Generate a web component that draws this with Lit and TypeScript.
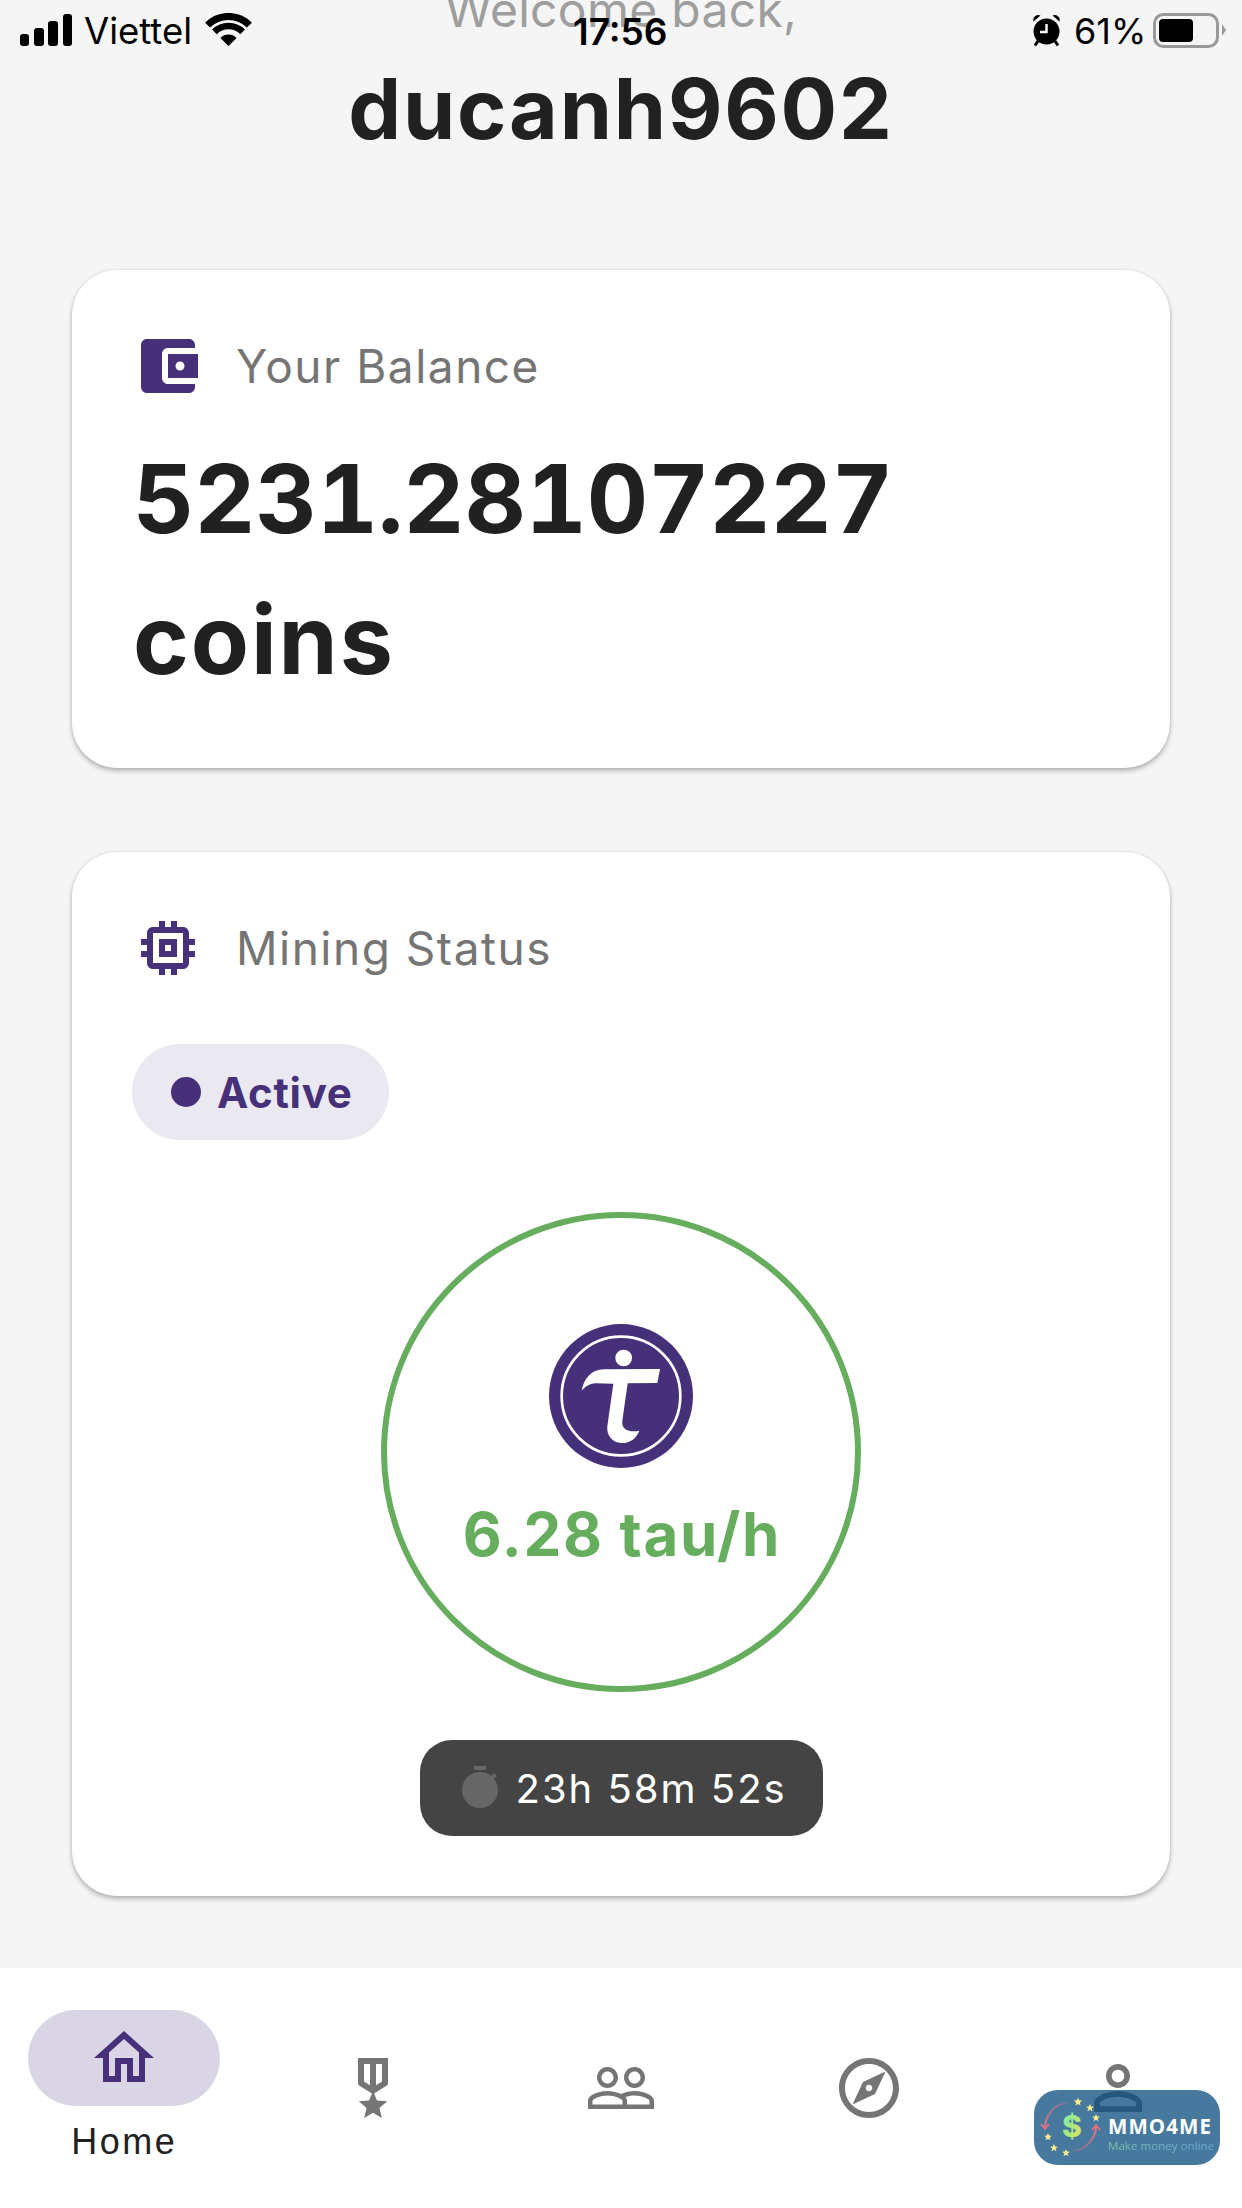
import { LitElement, html, css, svg, unsafeCSS } from "lit";
import { customElement } from "lit/decorators.js";

const PURPLE_HEX = "#47307a";
const PURPLE = unsafeCSS(PURPLE_HEX);
const star = (cx: number, cy: number, r: number) => {
  const pts: string[] = [];
  for (let i = 0; i < 10; i++) {
    const rad = i % 2 ? r * 0.45 : r;
    const a = -Math.PI / 2 + (i * Math.PI) / 5;
    pts.push(`${(cx + rad * Math.cos(a)).toFixed(1)},${(cy + rad * Math.sin(a)).toFixed(1)}`);
  }
  return svg`<polygon points=${pts.join(" ")} fill="#fdf08a"></polygon>`;
};

@customElement("app-root")
export class AppRoot extends LitElement {
  static styles = css`
    :host { display: block; }
    .page { position: relative; width: 1242px; height: 2208px; overflow: hidden; background: #f5f5f5; display: flex; flex-direction: column; font-family: Inter, "Liberation Sans", sans-serif; color: #212121; }
    .status { position: absolute; inset: 0 0 auto 0; height: 60px; font-family: Inter, "Liberation Sans", sans-serif; color: #000; font-size: 36.5px; }
    .status > * { position: absolute; }
    .signal { left: 20px; top: 13px; }
    .wifi { left: 205px; top: 13px; }
    .alarm { left: 1033px; top: 14px; }
    .battery { left: 1152px; top: 12px; }
    .carrier { left: 84px; top: 10px; line-height: 42px; }
    .time { left: 573px; top: 11px; line-height: 42px; font-weight: 600; font-size: 37px; }
    .pct { left: 1074px; top: 10px; line-height: 42px; font-size: 36px; }
    .header { display: flex; flex-direction: column; align-items: center; margin-top: -20px; }
    .welcome { font-size: 48px; line-height: 60px; color: #9e9e9e; letter-spacing: 0.3px; }
    .name { font-size: 84px; font-weight: 700; line-height: 102px; letter-spacing: 1.8px; margin-top: 18px; }
    .cards { display: flex; flex-direction: column; gap: 84px; padding: 0 72px; margin-top: 110px; }
    .card { background: #fff; border-radius: 45px; box-shadow: 0 3px 5px rgba(0,0,0,.26), 0 0 3px rgba(0,0,0,.1); padding: 60px 60px 0; box-sizing: border-box; }
    .balance { height: 498px; }
    .mining { height: 1044px; display: flex; flex-direction: column; }
    .title { display: flex; align-items: center; gap: 32px; height: 72px; font-size: 46px; color: #757575; letter-spacing: 1.5px; }
    .title svg { width: 72px; height: 72px; fill: ${PURPLE}; flex: none; }
    .amount { font-size: 95px; font-weight: 700; line-height: 141px; letter-spacing: 1.9px; margin-top: 26px; margin-left: 1px; }
    .digits { font-variant-numeric: tabular-nums; font-feature-settings: "tnum" 1; letter-spacing: -0.2px; }
    .pill { align-self: flex-start; display: flex; align-items: center; gap: 16px; height: 96px; padding: 0 36px 0 39px; margin-top: 60px; border-radius: 48px; background: #eae9f1; color: ${PURPLE}; font-size: 42px; font-weight: 700; letter-spacing: 0.7px; }
    .dot { width: 30px; height: 30px; border-radius: 50%; background: ${PURPLE}; }
    .ring { align-self: center; width: 480px; height: 480px; box-sizing: border-box; border: 6px solid #66ad5e; border-radius: 50%; margin-top: 72px; display: flex; flex-direction: column; align-items: center; }
    .ring svg { width: 144px; height: 144px; margin-top: 106px; flex: none; }
    .rate { font-size: 60px; font-weight: 700; color: #66ad5e; letter-spacing: 1.7px; line-height: 72px; margin-top: 30px; margin-left: 2px; white-space: nowrap; }
    .timer { align-self: center; display: flex; align-items: center; gap: 12px; height: 96px; width: 403px; box-sizing: border-box; padding-left: 36px; margin-top: 48px; border-radius: 32px; background: #444; color: #fff; font-size: 40px; letter-spacing: 2px; }
    .timer svg { width: 48px; height: 48px; fill: #666; flex: none; }
    .nav { margin-top: auto; height: 240px; background: #fff; display: grid; grid-template-columns: repeat(5, 1fr); align-items: center; justify-items: center; position: relative; }
    .nav svg { width: 72px; height: 72px; fill: #757575; display: block; }
    .item { display: flex; flex-direction: column; align-items: center; }
    .active { margin-top: -4px; }
    .active .ic { width: 192px; height: 96px; border-radius: 48px; background: #d9d5e5; display: flex; align-items: center; justify-content: center; }
    .nav .active svg { fill: ${PURPLE}; }
    .lbl { font-family: "Liberation Sans", Arial, sans-serif; font-size: 36px; line-height: 40px; letter-spacing: 2.5px; margin-top: 16px; color: #212121; }
    .logo { position: absolute; left: 1034px; top: 2090px; width: 186px; height: 75px; border-radius: 24px; background: rgba(13,79,129,.76); display: flex; }
    .logo svg { width: 74px; height: 75px; flex: none; }
    .lt { display: flex; flex-direction: column; margin-top: 24px; }
    .lt b { font-size: 20.5px; line-height: 24px; font-weight: 700; color: #fff; letter-spacing: 1.1px; font-family: "Open Sans", Inter, sans-serif; }
    .lt span { font-size: 11.6px; line-height: 16px; font-family: "Open Sans", sans-serif; white-space: nowrap; color: transparent; background: linear-gradient(90deg, #7cc7a8, #6aa7dc); -webkit-background-clip: text; background-clip: text; }
  `;

  render() {
    return html`<div class="page">
      <div class="header">
        <div class="welcome">Welcome back,</div>
        <div class="name">ducanh9602</div>
      </div>
      <div class="cards">
        <section class="card balance">
          <div class="title">
            <svg viewBox="0 0 24 24"><path d="M21 18v1c0 1.1-.9 2-2 2H5c-1.11 0-2-.9-2-2V5c0-1.1.89-2 2-2h14c1.1 0 2 .9 2 2v1h-9c-1.11 0-2 .9-2 2v8c0 1.1.89 2 2 2h9zm-9-2h10V8H12v8zm4-2.5c-.83 0-1.5-.67-1.5-1.5s.67-1.5 1.5-1.5 1.5.67 1.5 1.5-.67 1.5-1.5 1.5z"/></svg>
            Your Balance
          </div>
          <div class="amount"><span class="digits">5231.28107227</span><br />coins</div>
        </section>
        <section class="card mining">
          <div class="title">
            <svg viewBox="0 0 24 24"><path d="M15 9H9v6h6V9zm-2 4h-2v-2h2v2zm8-2V9h-2V7c0-1.1-.9-2-2-2h-2V3h-2v2h-2V3H9v2H7c-1.1 0-2 .9-2 2v2H3v2h2v2H3v2h2v2c0 1.1.9 2 2 2h2v2h2v-2h2v2h2v-2h2c1.1 0 2-.9 2-2v-2h2v-2h-2v-2h2zm-4 6H7V7h10v10z"/></svg>
            Mining Status
          </div>
          <div class="pill"><span class="dot"></span>Active</div>
          <div class="ring">
            <svg viewBox="0 0 432 432">
              <circle cx="216" cy="216" r="216" fill="${PURPLE_HEX}"></circle>
              <circle cx="216" cy="216" r="178" fill="none" stroke="#fff" stroke-width="8"></circle>
              <circle cx="224" cy="102" r="25" fill="#fff"></circle>
              <path fill="#fff" d="M98 200C105 165 125 137 165 136L333 135L325 177L236 178L220 290C216 320 245 325 271 320C262 345 240 358 218 357C190 357 172 335 175 307L193 179L140 178C120 178 108 190 98 200Z"></path>
            </svg>
            <div class="rate">6.28 tau/h</div>
          </div>
          <div class="timer">
            <svg viewBox="0 0 24 24"><path d="M15 1H9v2h6V1zm-4 13h2V8h-2v6zm8.03-6.61l1.42-1.42c-.43-.51-.9-.99-1.41-1.41l-1.42 1.42C16.07 4.74 14.12 4 12 4c-4.97 0-9 4.03-9 9s4.02 9 9 9 9-4.03 9-9c0-2.12-.74-4.07-1.97-5.61z"/></svg>
            23h 58m 52s
          </div>
        </section>
      </div>
      <nav class="nav">
        <div class="item active">
          <div class="ic"><svg viewBox="0 0 24 24"><path d="M12 5.69l5 4.5V18h-2v-6H9v6H7v-7.81l5-4.5M12 3L2 12h3v8h6v-6h2v6h6v-8h3L12 3z"/></svg></div>
          <div class="lbl">Home</div>
        </div>
        <div class="item"><svg viewBox="0 0 24 24"><path d="M17 10.43V2H7v8.43c0 .35.18.68.49.86l4.18 2.51-.99 2.34-3.41.29 2.59 2.24L9.07 22 12 20.23 14.93 22l-.78-3.33 2.59-2.24-3.41-.29-.99-2.34 4.18-2.51c.3-.18.48-.5.48-.86zM11 11.07l-2-1.2V4h2v7.07zm4-1.2l-2 1.2V4h2v5.87z"/></svg></div>
        <div class="item"><svg viewBox="0 0 24 24"><path d="M16.5 13c-1.2 0-3.07.34-4.5 1-1.43-.67-3.3-1-4.5-1C5.33 13 1 14.08 1 16.25V19h22v-2.75c0-2.17-4.33-3.25-6.5-3.25zm-4 4.5h-10v-1.25c0-.54 2.56-1.75 5-1.75s5 1.21 5 1.75v1.25zm9 0H14v-1.25c0-.46-.2-.86-.52-1.22.88-.3 1.96-.53 3.02-.53 2.44 0 5 1.21 5 1.75v1.25zM7.5 12c1.93 0 3.5-1.57 3.5-3.5S9.43 5 7.5 5 4 6.57 4 8.5 5.57 12 7.5 12zm0-5.5c1.1 0 2 .9 2 2s-.9 2-2 2-2-.9-2-2 .9-2 2-2zm9 5.5c1.93 0 3.5-1.57 3.5-3.5S18.43 5 16.5 5 13 6.57 13 8.5s1.57 3.5 3.5 3.5zm0-5.5c1.1 0 2 .9 2 2s-.9 2-2 2-2-.9-2-2 .9-2 2-2z"/></svg></div>
        <div class="item"><svg viewBox="0 0 24 24"><path d="M12 2C6.48 2 2 6.48 2 12s4.48 10 10 10 10-4.48 10-10S17.52 2 12 2zm0 18c-4.41 0-8-3.59-8-8s3.59-8 8-8 8 3.59 8 8-3.59 8-8 8zm-5.5-2.5l7.51-3.49L17.5 6.5 9.99 9.99 6.5 17.5zm5.5-6.6c.61 0 1.1.49 1.1 1.1s-.49 1.1-1.1 1.1-1.1-.49-1.1-1.1.49-1.1 1.1-1.1z"/></svg></div>
        <div class="item"><svg viewBox="0 0 24 24"><path d="M12 5.9c1.16 0 2.1.94 2.1 2.1s-.94 2.1-2.1 2.1S9.9 9.16 9.9 8s.94-2.1 2.1-2.1m0 9c2.97 0 6.1 1.46 6.1 2.1v1.1H5.9V17c0-.64 3.13-2.1 6.1-2.1M12 4C9.79 4 8 5.79 8 8s1.79 4 4 4 4-1.79 4-4-1.79-4-4-4zm0 9c-2.67 0-8 1.34-8 4v3h16v-3c0-2.66-5.33-4-8-4z"/></svg></div>
      </nav>
      <div class="logo">
        <svg viewBox="0 0 74 75">
          <defs>
            <linearGradient id="dg" x1="0" y1="0" x2="1" y2="1"><stop offset="0" stop-color="#6df0b8"></stop><stop offset="1" stop-color="#e8e04a"></stop></linearGradient>
            <linearGradient id="a1" x1="1" y1="0" x2="0" y2="1"><stop offset="0" stop-color="#e8707e" stop-opacity=".2"></stop><stop offset="1" stop-color="#f0707e"></stop></linearGradient>
            <linearGradient id="a2" x1="0" y1="1" x2="1" y2="0"><stop offset="0" stop-color="#e8707e" stop-opacity=".2"></stop><stop offset="1" stop-color="#f0707e"></stop></linearGradient>
          </defs>
          <path d="M34 13C20 14 11 25 11 39" fill="none" stroke="url(#a1)" stroke-width="2"></path>
          <path d="M7 34L11 39L15 34" fill="none" stroke="#f0707e" stroke-width="1.6"></path>
          <path d="M39 61C52 60 62 48 62 36" fill="none" stroke="url(#a2)" stroke-width="2"></path>
          <path d="M58 40L62 35L66 40" fill="none" stroke="#f0707e" stroke-width="1.6"></path>
          <text x="38" y="47" text-anchor="middle" font-size="30" font-weight="800" font-family="Inter, sans-serif" fill="url(#dg)">$</text>
          ${star(44, 12, 4.5)}${star(56, 18, 4)}${star(62, 28, 4)}${star(14, 47, 4)}${star(20, 58, 4)}${star(32, 63, 4)}
        </svg>
        <div class="lt"><b>MMO4ME</b><span>Make money online</span></div>
      </div>
      <div class="status">
        <svg class="signal" width="53" height="33" viewBox="0 0 53 33" fill="#000">
          <rect x="0" y="21" width="9" height="12" rx="3"></rect>
          <rect x="14" y="15" width="10" height="18" rx="3"></rect>
          <rect x="28" y="8" width="10" height="25" rx="3"></rect>
          <rect x="43" y="1" width="9" height="32" rx="3"></rect>
        </svg>
        <span class="carrier">Viettel</span>
        <svg class="wifi" width="47" height="33" viewBox="0 0 47 33">
          <path d="M2.6 12.1A29.5 29.5 0 0 1 44.4 12.1" fill="none" stroke="#000" stroke-width="7"></path>
          <path d="M9.4 18.9A20 20 0 0 1 37.6 18.9" fill="none" stroke="#000" stroke-width="6.5"></path>
          <path d="M23.5 33L15.4 24.9A11.5 11.5 0 0 1 31.6 24.9Z" fill="#000"></path>
        </svg>
        <span class="time">17:56</span>
        <svg class="alarm" width="27" height="33" viewBox="0 0 27 33">
          <circle cx="13.5" cy="17.5" r="13" fill="#000"></circle>
          <path d="M0.5 7.5A5 5 0 0 1 7.5 1.5ZM26.5 7.5A5 5 0 0 0 19.5 1.5Z" fill="#000"></path>
          <path d="M5 27L2 31.5M22 27L25 31.5" stroke="#000" stroke-width="3"></path>
          <path d="M13.5 10V18H7" fill="none" stroke="#fff" stroke-width="2.4"></path>
        </svg>
        <span class="pct">61%</span>
        <svg class="battery" width="76" height="36" viewBox="0 0 76 36">
          <rect x="2.5" y="2.5" width="63" height="32" rx="9" fill="none" stroke="#999" stroke-width="3"></rect>
          <rect x="7" y="7" width="34" height="23" rx="4" fill="#000"></rect>
          <path d="M70 12L74 18L70 24Z" fill="#999"></path>
        </svg>
      </div>
    </div>`;
  }
}
